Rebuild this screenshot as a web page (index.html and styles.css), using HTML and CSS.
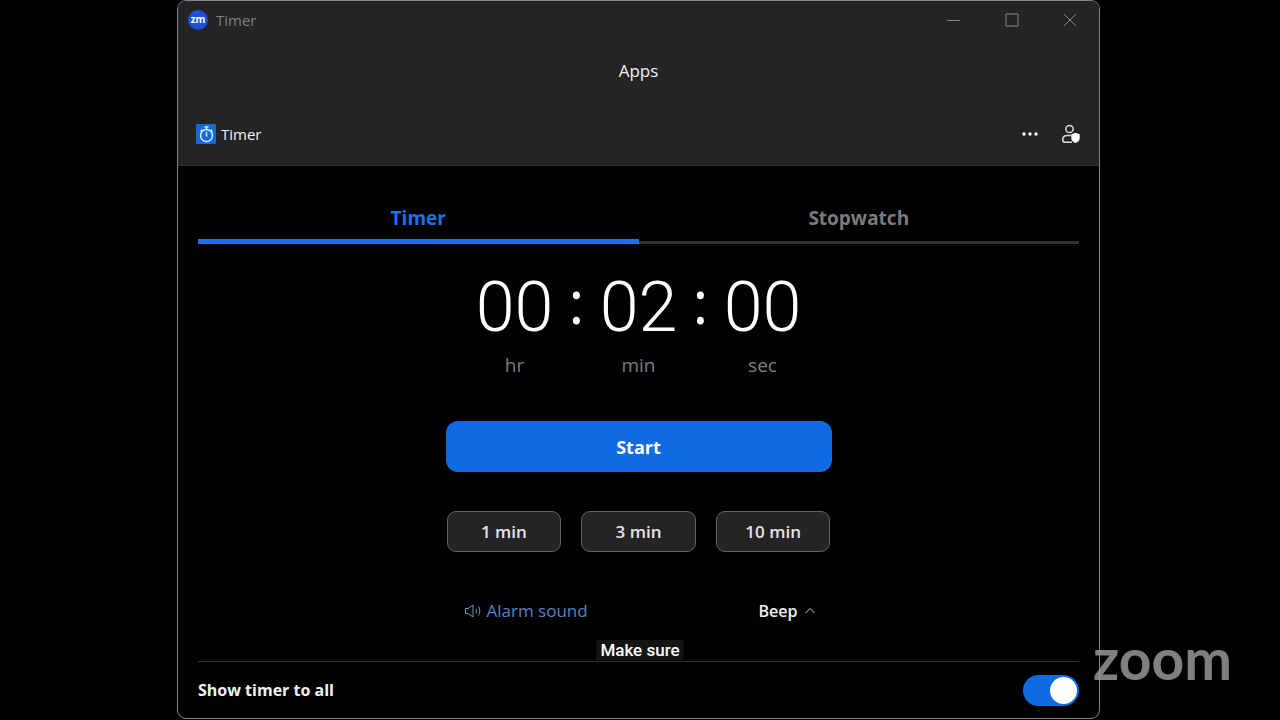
FILE: index.html
```
<!DOCTYPE html>
<html lang="en">
<head>
  <meta charset="utf-8">
  <title>Timer</title>
  <link rel="stylesheet" href="styles.css">
</head>
<body>
  <main class="window">
    <header class="header">
      <div class="title-bar">
        <svg class="app-logo" viewBox="0 0 20 20" width="20" height="20" aria-hidden="true">
          <circle cx="10" cy="10" r="10" fill="#1c50d8"/>
          <text x="10" y="13" text-anchor="middle" class="logo-text">zm</text>
        </svg>
        <span class="window-title">Timer</span>
        <div class="window-buttons">
          <button type="button" aria-label="Minimize">
            <svg viewBox="0 0 16 16" width="16" height="16"><path d="M1 8.500H14"/></svg>
          </button>
          <button type="button" aria-label="Maximize">
            <svg viewBox="0 0 16 16" width="16" height="16"><path d="M2 2H14V14H2Z"/></svg>
          </button>
          <button type="button" aria-label="Close">
            <svg viewBox="0 0 16 16" width="16" height="16"><path d="M2 2L14 14M14 2L2 14"/></svg>
          </button>
        </div>
      </div>

      <h1 class="apps-title">Apps</h1>

      <div class="app-bar">
        <svg viewBox="0 0 20 20" width="20" height="20" aria-hidden="true">
          <rect width="20" height="20" rx="1" fill="#1668dc"/>
          <g fill="none" stroke="#d5ebff" stroke-width="1.500" stroke-linecap="round">
            <circle cx="10.500" cy="11.500" r="6"/>
            <path d="M10.500 8.500V12M10.500 3V5.500M9 3H12M15 6L16 7M6 6L5 7"/>
          </g>
        </svg>
        <span class="app-name">Timer</span>
        <div class="app-actions">
          <button type="button" aria-label="More">
            <svg viewBox="0 0 18 18" width="18" height="18" fill="#fff">
              <circle cx="3" cy="9" r="1.700"/>
              <circle cx="9" cy="9" r="1.700"/>
              <circle cx="15" cy="9" r="1.700"/>
            </svg>
          </button>
          <button type="button" aria-label="Permissions">
            <svg viewBox="0 0 20 20" width="20" height="20">
              <circle cx="8.500" cy="5" r="3.600" fill="none" stroke="#ddd" stroke-width="1.500"/>
              <path d="M10 11.500H6C3 11.500 1.700 13.500 1.700 16C1.700 17.500 2.500 18.200 4 18.200H11" fill="none" stroke="#ddd" stroke-width="1.500"/>
              <path d="M14.500 8.700L18.700 10.300V14C18.700 16.500 17 18 14.500 19C12 18 10.300 16.500 10.300 14V10.300Z" fill="#fff"/>
            </svg>
          </button>
        </div>
      </div>
    </header>

    <section class="content">
      <div class="tabs" role="tablist">
        <button type="button" class="tab active" role="tab" aria-selected="true">Timer</button>
        <button type="button" class="tab" role="tab" aria-selected="false">Stopwatch</button>
      </div>

      <div class="timer">
        <div class="clock">
          <div class="unit"><span class="digits">00</span><span class="unit-label">hr</span></div>
          <span class="colon">:</span>
          <div class="unit"><span class="digits">02</span><span class="unit-label">min</span></div>
          <span class="colon">:</span>
          <div class="unit"><span class="digits">00</span><span class="unit-label">sec</span></div>
        </div>

        <button type="button" class="start">Start</button>

        <div class="presets">
          <button type="button">1 min</button>
          <button type="button">3 min</button>
          <button type="button">10 min</button>
        </div>

        <div class="alarm">
          <label class="alarm-label" for="alarm-sound">
            <svg viewBox="0 0 18 18" width="18" height="18" aria-hidden="true">
              <path d="M1.500 6.500H4L9 3V15L4 11.500H1.500ZM12 6.500Q13.500 9 12 11.500M14.500 4.500Q17.500 9 14.500 13.500"/>
            </svg>
            Alarm sound
          </label>
          <div class="alarm-choice">
            <select id="alarm-sound">
              <option>Beep</option>
            </select>
            <svg viewBox="0 0 12 8" width="12" height="8" aria-hidden="true"><path d="M1.500 6L6 1.500L10.500 6"/></svg>
          </div>
        </div>
      </div>
    </section>

    <footer class="footer">
      <label for="show-timer">Show timer to all</label>
      <input type="checkbox" id="show-timer" class="toggle" checked>
    </footer>
  </main>

  <div class="caption">Make sure</div>
  <div class="watermark">zoom</div>
</body>
</html>
```

FILE: styles.css
```
* {
  box-sizing: border-box;
}

body {
  margin: 0;
  min-height: 100vh;
  padding: 0 180px 0 177px;
  background-color: #000;
  color: #f2f2f2;
  font-family: "Open Sans", "Noto Sans", sans-serif;
  font-size: 16px;
  display: flex;
}

button {
  padding: 0;
  border: none;
  background: none;
  color: inherit;
  font-family: inherit;
  cursor: pointer;
}

svg {
  display: block;
}

.window {
  flex: 1;
  display: flex;
  flex-direction: column;
  margin-bottom: 1px;
  border: 1px solid #858585;
  border-radius: 9px;
  overflow: hidden;
}

.header {
  background-color: #242424;
  border-bottom: 1px solid #303030;
}

.title-bar {
  display: flex;
  align-items: center;
  height: 37px;
  padding: 0 21px 0 10px;
}

.logo-text {
  fill: #fff;
  font-size: 10px;
  font-weight: 700;
}

.window-title {
  margin-left: 8px;
  color: #7d7d7d;
  font-size: 15px;
}

.window-buttons {
  display: flex;
  gap: 42px;
  margin-left: auto;
}

.window-buttons svg {
  fill: none;
  stroke: #858585;
}

.apps-title {
  margin: 0;
  line-height: 24px;
  padding: 21px 0 20px;
  font-size: 17px;
  font-weight: 400;
  text-align: center;
}

.app-bar {
  display: flex;
  align-items: center;
  height: 62px;
  padding: 0 18px;
}

.app-name {
  margin-left: 5px;
  font-size: 15px;
}

.app-actions {
  display: flex;
  align-items: center;
  gap: 22px;
  margin-left: auto;
}

.content {
  padding: 30px 20px 0;
}

.tabs {
  display: grid;
  grid-template-columns: 1fr 1fr;
}

.tab {
  height: 48px;
  padding-bottom: 2px;
  border-bottom: 3px solid #333;
  color: #7b7b7b;
  font-size: 19px;
  font-weight: 700;
}

.tab.active {
  padding-bottom: 0;
  border-bottom: 5px solid #1672f3;
  color: #1672f3;
}

.timer {
  width: 386px;
  margin: 0 auto;
}

.clock {
  display: grid;
  grid-template-columns: 84px 40px 84px 40px 84px;
  justify-content: center;
  padding-top: 24px;
}

.unit {
  display: flex;
  flex-direction: column;
  align-items: center;
}

.digits {
  height: 78px;
  color: #fff;
  font-family: Roboto, sans-serif;
  font-size: 70px;
  font-weight: 300;
  line-height: 78px;
}

.colon {
  color: #fff;
  font-size: 60px;
  font-weight: 400;
  line-height: 66px;
  text-align: center;
}

.unit-label {
  color: #7d7d7d;
  font-size: 19px;
  line-height: 38px;
}

.start {
  width: 100%;
  height: 51px;
  margin-top: 37px;
  border-radius: 12px;
  background-color: #106be0;
  color: #fff;
  font-size: 18px;
  font-weight: 700;
}

.presets {
  display: grid;
  grid-template-columns: repeat(3, 1fr);
  gap: 20px;
  padding: 39px 1px 0;
}

.presets button {
  height: 41px;
  border: 1px solid #626262;
  border-radius: 9px;
  background-color: #242426;
  color: #e4e4e4;
  font-size: 17px;
  font-weight: 600;
}

.alarm {
  display: flex;
  align-items: center;
  justify-content: space-between;
  padding: 45px 16px 0 18px;
}

.alarm-label {
  display: flex;
  align-items: center;
  gap: 5px;
  color: #5b80c8;
  font-size: 17px;
  line-height: 28px;
}

.alarm-label svg {
  fill: none;
  stroke: #7890bd;
}

.alarm-choice {
  display: flex;
  align-items: center;
  gap: 6px;
}

.alarm-choice select {
  appearance: none;
  padding: 0;
  border: none;
  background: none;
  color: #f2f2f2;
  font-family: inherit;
  font-size: 16px;
  font-weight: 600;
}

.alarm-choice svg {
  fill: none;
  stroke: #ccc;
}

.footer {
  display: flex;
  align-items: center;
  justify-content: space-between;
  height: 57px;
  margin: auto 20px 0;
  border-top: 1px solid #333;
  font-size: 16px;
  font-weight: 700;
}

.toggle {
  appearance: none;
  display: flex;
  align-items: center;
  width: 56px;
  height: 31px;
  margin: 0;
  padding: 2px;
  border-radius: 16px;
  background-color: #555;
  cursor: pointer;
}

.toggle::before {
  content: "";
  width: 27px;
  height: 27px;
  border-radius: 50%;
  background-color: #fff;
}

.toggle:checked {
  justify-content: flex-end;
  background-color: #106be0;
}

/* Live caption over the window */
.caption {
  position: absolute;
  bottom: 60px;
  left: 50%;
  transform: translateX(-50%);
  padding: 0 4px;
  background-color: #141414;
  color: #fff;
  font-family: Roboto, sans-serif;
  font-size: 17px;
  font-weight: 500;
  line-height: 20px;
}

.watermark {
  position: absolute;
  right: 48px;
  bottom: 32px;
  color: rgba(150, 150, 150, 0.85);
  font-family: Lato, sans-serif;
  font-size: 57px;
  font-weight: 700;
  line-height: 60px;
}
```
